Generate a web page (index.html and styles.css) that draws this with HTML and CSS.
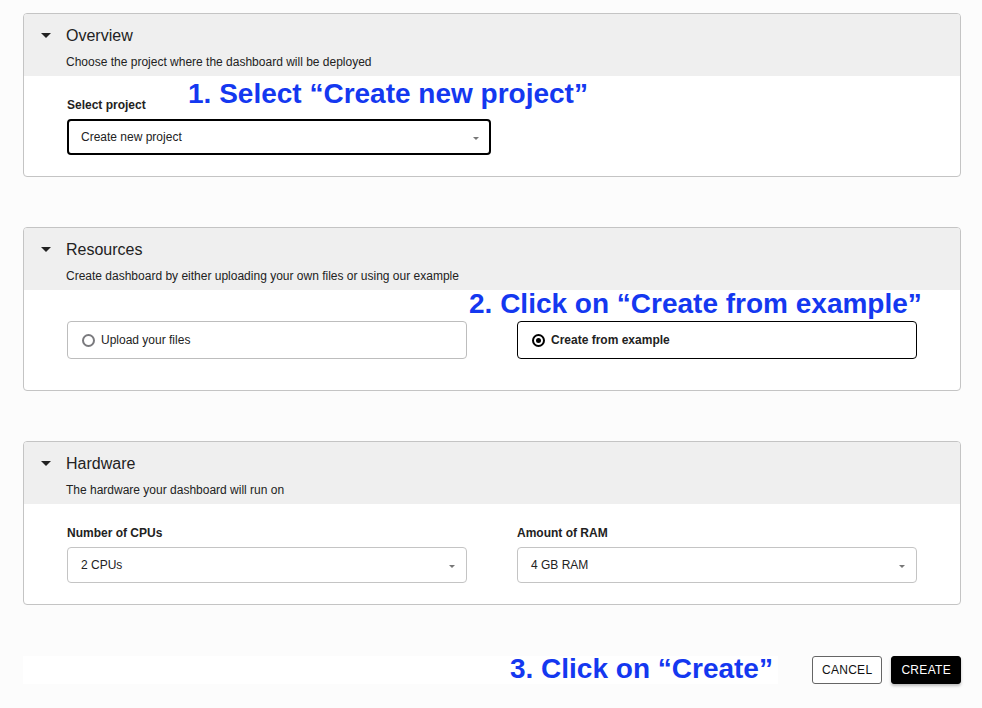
FILE: index.html
```html
<!DOCTYPE html>
<html lang="en">
<head>
<meta charset="utf-8">
<title>Create dashboard</title>
<link rel="stylesheet" href="styles.css">
</head>
<body>
<main class="page">
  <section class="card">
    <header class="card-head">
      <span class="caret"></span>
      <div class="head-text">
        <h2 class="title">Overview</h2>
        <p class="subtitle">Choose the project where the dashboard will be deployed</p>
      </div>
    </header>
    <div class="card-body">
      <div class="field field-wide">
        <label class="label">Select project</label>
        <div class="select select-focus"><span>Create new project</span><span class="arrow"></span></div>
      </div>
      <div class="note note-1">1. Select “Create new project”</div>
    </div>
  </section>

  <section class="card">
    <header class="card-head">
      <span class="caret"></span>
      <div class="head-text">
        <h2 class="title">Resources</h2>
        <p class="subtitle">Create dashboard by either uploading your own files or using our example</p>
      </div>
    </header>
    <div class="card-body body-radios">
      <div class="cols">
        <div class="radio-box"><span class="radio"></span><span>Upload your files</span></div>
        <div class="radio-box radio-box-on"><span class="radio radio-on"></span><span>Create from example</span></div>
      </div>
      <div class="note note-2">2. Click on “Create from example”</div>
    </div>
  </section>

  <section class="card">
    <header class="card-head">
      <span class="caret"></span>
      <div class="head-text">
        <h2 class="title">Hardware</h2>
        <p class="subtitle">The hardware your dashboard will run on</p>
      </div>
    </header>
    <div class="card-body">
      <div class="cols">
        <div class="field">
          <label class="label">Number of CPUs</label>
          <div class="select"><span>2 CPUs</span><span class="arrow"></span></div>
        </div>
        <div class="field">
          <label class="label">Amount of RAM</label>
          <div class="select"><span>4 GB RAM</span><span class="arrow"></span></div>
        </div>
      </div>
    </div>
  </section>

  <footer class="actions">
    <div class="strip"><span class="note note-3">3. Click on “Create”</span></div>
    <button class="btn btn-cancel">CANCEL</button>
    <button class="btn btn-create">CREATE</button>
  </footer>
</main>
</body>
</html>
```

FILE: styles.css
```css
* { box-sizing: border-box; }
html, body { margin: 0; padding: 0; }
body {
  background: #fcfcfc;
  font-family: "Liberation Sans", Arial, Helvetica, sans-serif;
  color: #222;
  width: 982px;
  height: 708px;
  overflow: hidden;
}
.page {
  padding: 13px 21px 0 23px;
  display: flex;
  flex-direction: column;
  gap: 50px;
}
.card {
  background: #fff;
  border: 1px solid #c4c4c4;
  border-radius: 4px;
}
.card-head {
  background: #efefef;
  display: flex;
  align-items: flex-start;
  padding: 12px 0 6px 17px;
  border-radius: 3px 3px 0 0;
}
.caret {
  width: 0; height: 0;
  border-left: 5px solid transparent;
  border-right: 5px solid transparent;
  border-top: 5px solid #222;
  margin: 7px 15px 0 0;
}
.title {
  margin: 0;
  font-size: 16px;
  font-weight: 400;
  line-height: 20px;
  color: #222;
}
.subtitle {
  margin: 8px 0 0;
  font-size: 12px;
  line-height: 16px;
  color: #222;
}
.card-body {
  position: relative;
  padding: 21px 44px 21px 43px;
}
.body-radios { padding-top: 31px; padding-bottom: 31px; }
.cols {
  display: grid;
  grid-template-columns: 400px 400px;
  column-gap: 50px;
}
.field { display: flex; flex-direction: column; }
.field-wide { width: 424px; }
.label {
  font-size: 12px;
  font-weight: 700;
  line-height: 16px;
  margin-bottom: 6px;
  color: #222;
}
.select {
  height: 36px;
  border: 1px solid #c4c4c4;
  border-radius: 4px;
  display: flex;
  align-items: center;
  justify-content: space-between;
  padding: 0 11px 0 13px;
  font-size: 12px;
  color: #222;
  background: #fff;
}
.select-focus {
  border: 2px solid #000;
  padding: 0 10px 0 12px;
}
.arrow {
  width: 0; height: 0;
  border-left: 3px solid transparent;
  border-right: 3px solid transparent;
  border-top: 3px solid #777;
  margin-top: 2px;
}
.radio-box {
  height: 38px;
  border: 1px solid #bdbdbd;
  border-radius: 4px;
  display: flex;
  align-items: center;
  gap: 6px;
  padding-left: 14px;
  font-size: 12px;
  color: #222;
  background: #fff;
}
.radio-box-on { border-color: #000; font-weight: 700; }
.radio {
  width: 13px; height: 13px;
  border-radius: 50%;
  border: 2px solid #7a7a7e;
  display: inline-flex;
  align-items: center;
  justify-content: center;
}
.radio-on { border-color: #000; }
.radio-on::after {
  content: "";
  width: 5px; height: 5px;
  border-radius: 50%;
  background: #000;
}
.note {
  font-family: "Liberation Sans", Arial, Helvetica, sans-serif;
  font-weight: 700;
  font-size: 28px;
  line-height: 30px;
  color: #1438f0;
  white-space: nowrap;
}
.note-1 { position: absolute; left: 164px; top: 3px; }
.note-2 { position: absolute; left: 445px; top: -1px; }
.actions {
  display: flex;
  align-items: center;
  margin-top: 1px;
}
.strip {
  flex: 1;
  height: 28px;
  background: #fff;
  margin-right: 34px;
  display: flex;
  align-items: center;
  justify-content: flex-end;
  padding-right: 5px;
}
.note-3 { line-height: 26px; margin-bottom: 2px; }
.btn {
  height: 28px;
  font-family: "Liberation Sans", Arial, Helvetica, sans-serif;
  font-size: 12px;
  letter-spacing: 0.3px;
  border-radius: 3px;
  padding: 0 9px;
  cursor: pointer;
}
.btn-cancel {
  background: #fff;
  color: #111;
  border: 1px solid #666;
  margin-right: 9px;
}
.btn-create {
  background: #000;
  color: #fff;
  border: 1px solid #000;
  box-shadow: 0 2px 3px rgba(0,0,0,0.25);
}
```
